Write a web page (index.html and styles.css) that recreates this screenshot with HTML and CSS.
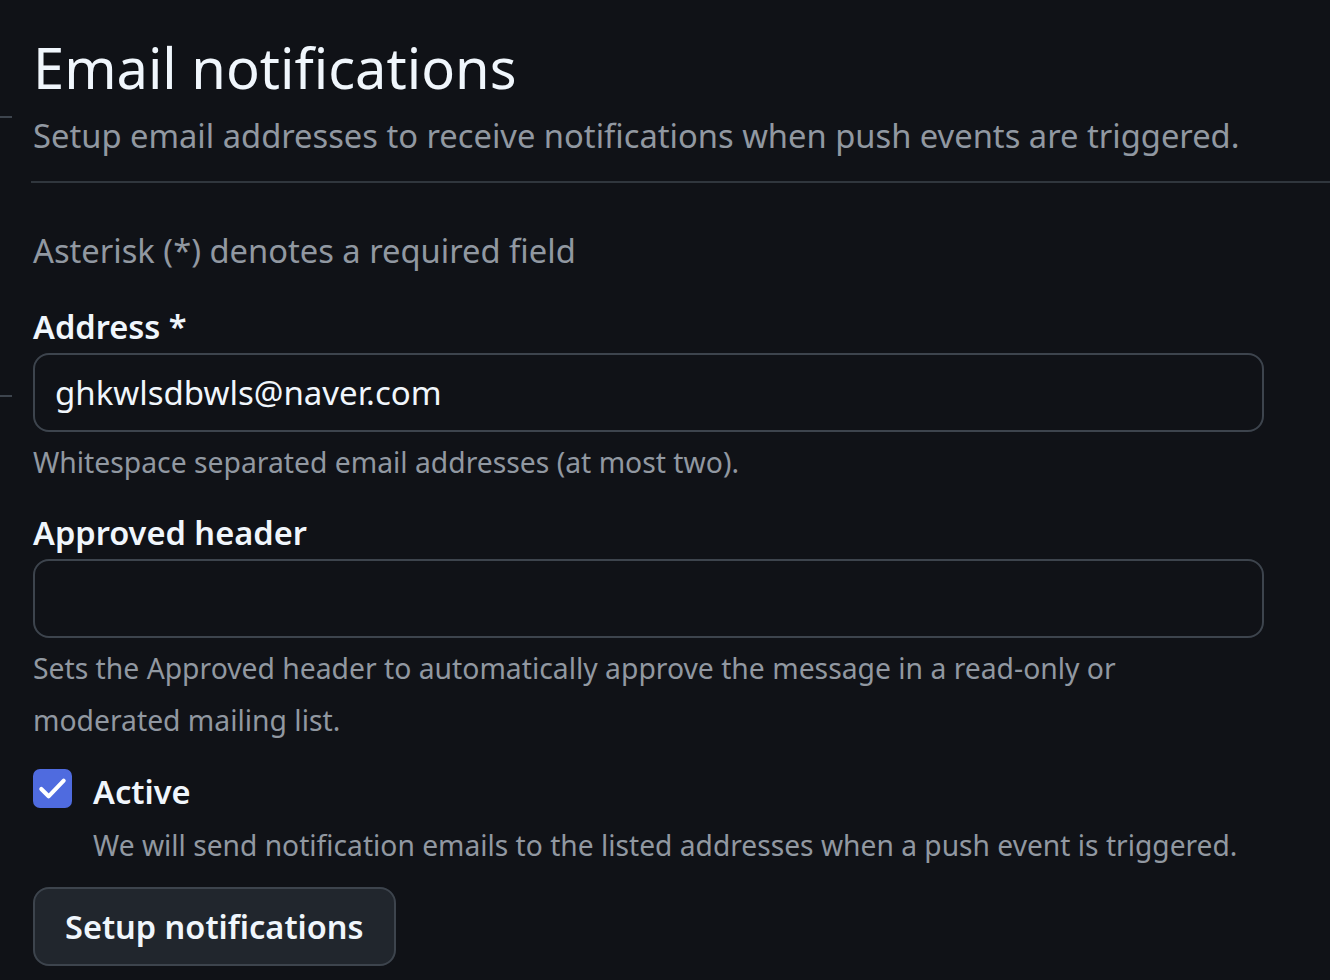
FILE: index.html
```html
<!DOCTYPE html>
<html lang="en">
<head>
<meta charset="UTF-8" />
<meta name="viewport" content="width=device-width, initial-scale=1.0" />
<title>Email notifications</title>
<link rel="stylesheet" href="styles.css">
</head>
<body>
<div class="layout">
  <div class="side">
    <div class="side-line first"></div>
    <div class="side-line second"></div>
  </div>
  <div class="main">
    <div class="subhead">
      <h2 class="subhead-heading">Email notifications</h2>
      <p class="subhead-desc">Setup email addresses to receive notifications when push events are triggered.</p>
    </div>

    <p class="required-note">Asterisk (*) denotes a required field</p>

    <div class="form-group">
      <label class="form-label" for="address">Address *</label>
      <input class="form-input" type="text" id="address" value="ghkwlsdbwls@naver.com">
      <p class="note">Whitespace separated email addresses (at most two).</p>
    </div>

    <div class="form-group">
      <label class="form-label" for="approved">Approved header</label>
      <input class="form-input" type="text" id="approved" value="">
      <p class="note">Sets the Approved header to automatically approve the message in a read-only or moderated mailing list.</p>
    </div>

    <div class="check-group">
      <div class="check-row">
        <span class="checkbox">
          <svg viewBox="0 0 40 40" width="39" height="39"><path d="M8.5 20.5l7.5 7.5L31.5 12" fill="none" stroke="#fff" stroke-width="4.2" stroke-linecap="round" stroke-linejoin="round"/></svg>
        </span>
        <span class="check-label">Active</span>
      </div>
      <p class="check-note">We will send notification emails to the listed addresses when a push event is triggered.</p>
    </div>

    <button class="btn">Setup notifications</button>
  </div>
</div>
</body>
</html>
```

FILE: styles.css
```css
body { margin: 0; background: #101217; color: #f0f6fc; font-family: "Noto Sans", "Open Sans", sans-serif; overflow: hidden; }
.layout { display: flex; height: 980px; }
.side { width: 12px; flex-shrink: 0; display: flex; flex-direction: column; margin-right: 21px; }
.side-line { height: 2px; background: #3d444d; }
.side-line.first { margin-top: 116px; }
.side-line.second { margin-top: 277px; }
.main { flex: 1; padding-top: 27px; }

.subhead { border-bottom: 2px solid #30363d; padding-bottom: 20px; margin-left: -2px; padding-left: 2px; }
.subhead-heading { margin: 0; font-size: 56px; font-weight: 400; line-height: 80px; }
.subhead-desc { margin: 4px 0 0; font-size: 32.7px; line-height: 50px; color: #9198a1; }

.required-note { margin: 43px 0 0; font-size: 32.7px; line-height: 50px; color: #9198a1; }

.form-group { margin-top: 27px; }
.form-group + .form-group { margin-top: 21px; }
.form-label { display: block; font-size: 32.6px; font-weight: 600; line-height: 48px; }
.form-input { display: block; box-sizing: border-box; width: 1231px; height: 79px; margin-top: 2px; padding: 0 20px; background: transparent; border: 2px solid #3d444d; border-radius: 16px; color: #f0f6fc; font-family: inherit; font-size: 33px; outline: none; }
.note { margin: 4px 0 0; font-size: 28.3px; line-height: 52px; color: #9198a1; width: 1231px; }

.check-group { margin-top: 22px; }
.check-row { display: flex; align-items: flex-start; gap: 21px; height: 48px; }
.checkbox { width: 39px; height: 39px; margin-top: 1px; border-radius: 7px; background: #4f6bdf; display: flex; }
.check-label { font-size: 32.6px; font-weight: 600; line-height: 48px; }
.check-note { margin: 3px 0 0 60px; font-size: 28.2px; line-height: 52px; color: #9198a1; }

.btn { margin-top: 16px; height: 79px; padding: 0 30px; background: #21262d; border: 2px solid #3d444d; border-radius: 16px; color: #f0f6fc; font-family: inherit; font-size: 32.5px; font-weight: 600; cursor: pointer; }
```
